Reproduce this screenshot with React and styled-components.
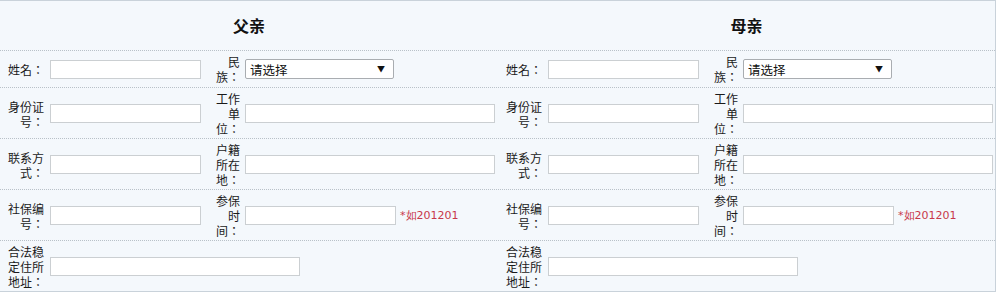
import React from "react";
import styled, { createGlobalStyle } from "styled-components";

const GlobalStyle = createGlobalStyle`
  html, body { margin: 0; padding: 0; background: #ffffff; }
  body { font-family: "Noto Sans CJK SC", "Noto Sans", sans-serif; font-size: 12px; color: #222; }
`;

const Form = styled.div`
  width: 996px;
  box-sizing: border-box;
  background: #f4f8fc;
  border-top: 1px solid #c9d2da;
  border-right: 1px solid #c9d2da;
  border-bottom: 1px solid #c9d2da;
`;

const HeaderRow = styled.div`
  display: grid;
  grid-template-columns: 498px 1fr;
  height: 49px;
`;

const Title = styled.div`
  display: flex;
  align-items: center;
  justify-content: center;
  font-size: 16px;
  font-weight: bold;
  color: #111;
  padding-bottom: 2px;
`;

const FieldRow = styled.div`
  display: grid;
  grid-template-columns: 498px 1fr;
  border-top: 1px dotted #b9c1c8;
`;

const Half = styled.div`
  display: flex;
  align-items: center;
  padding: ${(p) => (p.$tall ? "3px 0 2px" : "3px 0 3px")} 8px;
`;

const Label = styled.div`
  flex: none;
  width: ${(p) => p.$w}px;
  margin-left: ${(p) => p.$ml || 0}px;
  margin-right: ${(p) => p.$mr || 0}px;
  font-family: "Noto Sans CJK TC", "Noto Sans CJK SC", sans-serif;
  font-size: 12px;
  line-height: 15px;
  text-align: ${(p) => p.$align || "right"};
  color: #1a1a1a;
`;

const Input = styled.input`
  flex: none;
  width: ${(p) => p.$w}px;
  height: 19px;
  box-sizing: border-box;
  border: 1px solid #cbcfd2;
  background: #fff;
  padding: 0 3px;
  margin: 0;
  font-size: 12px;
  outline: none;
`;

const SelectWrap = styled.div`
  position: relative;
  flex: none;
  width: ${(p) => p.$w}px;
  height: 20px;
`;

const Select = styled.select`
  appearance: none;
  -webkit-appearance: none;
  width: 100%;
  height: 100%;
  box-sizing: border-box;
  border: 1px solid #a9adb1;
  border-radius: 2px;
  background: #fff;
  padding: 0 4px;
  margin: 0;
  font-family: "Noto Sans CJK SC", sans-serif;
  font-size: 12.5px;
  color: #111;
  outline: none;
`;

const Arrow = styled.span`
  position: absolute;
  right: 9px;
  top: 50%;
  transform: translateY(-50%);
  font-size: 8px;
  line-height: 1;
  color: #111;
  pointer-events: none;
`;

const Hint = styled.span`
  margin-left: 4px;
  font-family: "DejaVu Sans", sans-serif;
  font-size: 11px;
  color: #c8374a;
  white-space: nowrap;
`;

const Lines = ({ lines }) =>
  lines.map((l, i) => (
    <React.Fragment key={i}>
      {i > 0 && <br />}
      {l}
    </React.Fragment>
  ));

const ParentColumn = ({ row }) => {
  if (row === 0) {
    return (
      <Half>
        <Label $w={36} $mr={6}>姓名：</Label>
        <Input $w={151} />
        <Label $w={24} $ml={15} $mr={5}>
          <Lines lines={["民", "族："]} />
        </Label>
        <SelectWrap $w={149}>
          <Select defaultValue="">
            <option value="">请选择</option>
          </Select>
          <Arrow>▼</Arrow>
        </SelectWrap>
      </Half>
    );
  }
  if (row === 1) {
    return (
      <Half $tall>
        <Label $w={36} $mr={6}>
          <Lines lines={["身份证", "号："]} />
        </Label>
        <Input $w={151} />
        <Label $w={24} $ml={15} $mr={5}>
          <Lines lines={["工作", "单", "位："]} />
        </Label>
        <Input $w={250} />
      </Half>
    );
  }
  if (row === 2) {
    return (
      <Half $tall>
        <Label $w={36} $mr={6}>
          <Lines lines={["联系方", "式："]} />
        </Label>
        <Input $w={151} />
        <Label $w={24} $ml={15} $mr={5}>
          <Lines lines={["户籍", "所在", "地："]} />
        </Label>
        <Input $w={250} />
      </Half>
    );
  }
  if (row === 3) {
    return (
      <Half $tall>
        <Label $w={36} $mr={6}>
          <Lines lines={["社保编", "号："]} />
        </Label>
        <Input $w={151} />
        <Label $w={24} $ml={15} $mr={5}>
          <Lines lines={["参保", "时", "间："]} />
        </Label>
        <Input $w={151} />
        <Hint>*如201201</Hint>
      </Half>
    );
  }
  return (
    <Half $tall>
      <Label $w={36} $mr={6} $align="left">
        <Lines lines={["合法稳", "定住所", "地址："]} />
      </Label>
      <Input $w={250} />
    </Half>
  );
};

export default function App() {
  const rows = [0, 1, 2, 3, 4];
  return (
    <>
      <GlobalStyle />
      <Form>
        <HeaderRow>
          <Title>父亲</Title>
          <Title>母亲</Title>
        </HeaderRow>
        {rows.map((r) => (
          <FieldRow key={r}>
            <ParentColumn row={r} />
            <ParentColumn row={r} />
          </FieldRow>
        ))}
      </Form>
    </>
  );
}
